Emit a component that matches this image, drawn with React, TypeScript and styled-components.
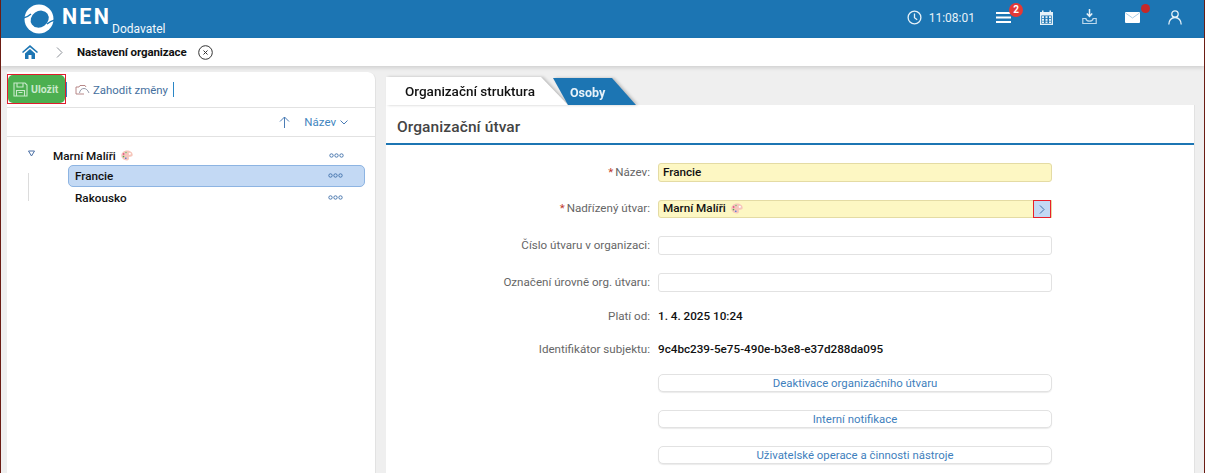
import React from "react";
import styled, { createGlobalStyle } from "styled-components";

const Global = createGlobalStyle`
  html, body { margin: 0; padding: 0; background: #efefef; }
  #root { width: 1205px; height: 473px; overflow: hidden; }
  * { box-sizing: border-box; }
`;

const Page = styled.div`
  width: 1205px; height: 473px; overflow: hidden; display: flex; flex-direction: column;
  background: #efefef; font-family: Roboto, "Liberation Sans", sans-serif; font-size: 12px;
  border-left: 1px solid #6b1d14; border-right: 1px solid #6b1d14;
`;
const Header = styled.header`
  height: 38px; flex: none; background: #1c75b3; color: #fff; display: flex; align-items: center;
  padding-left: 23px;
`;
const Brand = styled.div`display: flex; align-items: flex-start; height: 38px; padding-top: 4px;`;
const BrandName = styled.span`
  font-size: 21.5px; font-weight: 700; letter-spacing: 2.2px; line-height: 26px; margin-left: 8px;
`;
const BrandRole = styled.span`font-size: 12px; line-height: 14px; margin: 18px 0 0 1px; color: #f2f8fc;`;
const HeaderTools = styled.div`margin-left: auto; display: flex; align-items: center; height: 38px; padding-right: 21px;`;
const Clock = styled.div`display: flex; align-items: center; gap: 7px; font-size: 12px; font-weight: 400; color: #e6f1f8; margin-right: 20px; margin-bottom: 3px;`;
const ToolIcon = styled.span`
  position: relative; display: flex; width: 16px; height: 16px; margin-bottom: 4px; align-items: center; justify-content: center;
  & + & { margin-left: 27px; }
`;
const Badge = styled.span`
  position: absolute; top: -6px; right: -12px; width: 14px; height: 14px; border-radius: 50%;
  background: #e53935; color: #fff; font-size: 10px; font-weight: 700; line-height: 14px; text-align: center;
`;
const Dot = styled.span`
  position: absolute; top: -5px; right: -10px; width: 9px; height: 9px; border-radius: 50%; background: #c62828;
`;
const Crumbs = styled.nav`
  height: 28px; flex: none; background: #fff; display: flex; align-items: center; padding-left: 21px;
  box-shadow: 0 2px 4px rgba(0,0,0,.13); position: relative; z-index: 1;
`;
const CrumbArrow = styled.span`display: flex; margin-left: 18px; margin-right: 14px;`;
const CrumbText = styled.span`font-size: 11.5px; font-weight: 700; color: #111; letter-spacing: -.1px;`;
const CrumbClose = styled.span`display: flex; margin-left: 11px;`;
const Body = styled.div`flex: 1; display: flex; padding: 6px 9px 0 6px; min-height: 0; gap: 10px;`;
const Left = styled.aside`
  width: 369px; flex: none; background: #fff; border-radius: 0 8px 0 0; border-right: 1px solid #e2e2e2;
  display: flex; flex-direction: column;
`;
const Toolbar = styled.div`
  height: 36px; flex: none; display: flex; align-items: center; border-bottom: 1px solid #e2e2e2;
`;
const SaveButton = styled.button`
  width: 59px; height: 30px; margin-top: -1px; padding: 0; border: 1px solid #e01c2c; background: #fff; display: flex; outline: none;
`;
const SaveFace = styled.span`
  flex: 1; display: flex; align-items: center; gap: 3px; padding-left: 5px; background: #4caf50; border-radius: 5px;
  color: #c9e9cb; font: 700 10.5px Roboto, sans-serif;
`;
const Divider = styled.span`width: 1px; height: 15px; background: #2a86c6; flex: none;`;
const DiscardButton = styled.button`
  display: flex; align-items: center; gap: 3px; margin-left: 8px; margin-right: 5px; padding: 0; border: 0; background: none;
  font: 400 11.4px Roboto, sans-serif; color: #456f9e;
`;
const SortRow = styled.div`
  height: 29px; flex: none; display: flex; align-items: center; justify-content: flex-end; border-bottom: 1px solid #e2e2e2;
  padding-right: 27px; color: #3f86c0; font-size: 11.5px;
`;
const SortArrow = styled.span`display: flex; margin-right: 14px;`;
const SortCaret = styled.span`display: flex; margin-left: 4px;`;
const Tree = styled.div`padding: 9px 10px 0 0; display: flex; flex-direction: column;`;
const RootNode = styled.div`
  height: 19px; display: flex; align-items: center; padding-left: 21px; font-size: 11.7px; font-weight: 500; color: #111; position: relative;
`;
const Toggle = styled.span`display: flex; margin-top: -5px;`;
const NodeName = styled.span`margin-left: 18px; margin-right: 5px;`;
const Dots = styled.span`position: absolute; right: 21px; top: 50%; margin-top: -3px; display: flex;`;
const Branch = styled.div`position: relative; padding-left: 61px; &::before { content: ""; position: absolute; left: 21px; top: 8px; height: 28px; width: 1px; background: #dcdcdc; }`;
const ChildNode = styled.div<{ $active?: boolean }>`
  height: 22px; position: relative; display: flex; align-items: center; padding-left: 6px; font-size: 11.7px; font-weight: 500; color: #111;
  border-radius: 5px; border: 1px solid ${p => (p.$active ? "#8db4e2" : "transparent")}; background: ${p => (p.$active ? "#c3d9f4" : "transparent")};
`;
const Right = styled.main`flex: 1; display: flex; flex-direction: column; min-width: 0;`;
const Tabs = styled.div`height: 28px; flex: none; margin-top: 5px; display: flex; align-items: flex-end;`;
const TabShadow = styled.div`display: flex; flex: none; filter: drop-shadow(2px 0 1.5px rgba(0,0,0,.22));`;
const ActiveTab = styled.div`
  height: 28px; width: 182px; background: #fff; padding-left: 19px; line-height: 28px; font-size: 13.5px; font-weight: 500; color: #111;
  clip-path: polygon(0 0, 155px 0, 100% 100%, 0 100%);
`;
const Tab = styled.div`
  height: 27px; width: 83px; background: #1c75b3; color: #e8f2f9; font-size: 12.5px; font-weight: 700; line-height: 29px; padding-left: 17px;
  clip-path: polygon(0 0, 59px 0, 100% 100%, 15px 100%);
`;
const TabOverlap = styled(TabShadow)`margin-left: -15px;`;
const Panel = styled.section`flex: 1; background: #fff; display: flex; flex-direction: column; min-height: 0; border-right: 1px solid #e2e2e2;`;
const PanelTitle = styled.h2`
  margin: 0; height: 40px; flex: none; border-bottom: 2px solid #1c75b3; padding-left: 11px; line-height: 44px;
  font-size: 15.5px; font-weight: 500; color: #444; letter-spacing: .1px;
`;
const Form = styled.div`
  display: grid; grid-template-columns: 264px 394px; column-gap: 8px; align-items: start; padding-top: 18px;
`;
const Label = styled.label<{ $h: number }>`
  text-align: right; font-size: 11.6px; color: #666; height: ${p => p.$h}px; display: flex; align-items: center; justify-content: flex-end;
`;
const Star = styled.span`color: #c0392b; margin-right: 2px;`;
const Slot = styled.div<{ $h: number }>`height: ${p => p.$h}px; display: flex; align-items: flex-start;`;
const Field = styled.div<{ $required?: boolean }>`
  width: 100%; height: 19px; border-radius: 3px; display: flex; align-items: center; padding: 0 0 2px 4px; position: relative;
  font-size: 11.7px; font-weight: 500; color: #111;
  border: 1px solid ${p => (p.$required ? "#e4dba4" : "#e2e2e2")};
  background: ${p => (p.$required ? "#fdf7c3" : "#fff")};
`;
const PickerField = styled(Field)`height: 18px; border-radius: 3px 0 0 3px;`;
const FieldMark = styled.span`display: flex; margin-left: 5px;`;
const Picker = styled.span`
  position: absolute; right: 0; top: -1px; width: 18px; height: 18px; background: #c3d9f4; border: 1px solid #e8202a;
  display: flex; align-items: center; justify-content: center;
`;
const Value = styled.span`font-size: 11.7px; font-weight: 500; color: #111; line-height: 21px;`;
const ActionButton = styled.button`
  width: 100%; height: 18px; border: 1px solid #e2e2e2; border-radius: 5px; background: #fff; padding: 0;
  box-shadow: 0 1px 1px rgba(0,0,0,.08);
  font: 400 11.4px Roboto, sans-serif; color: #3f7fbd;
`;

const Logo = () => (
  <svg width="30" height="30" viewBox="0 0 30 30">
    <circle cx="15" cy="15" r="14.500" fill="#fff" />
    <ellipse cx="15.500" cy="15.500" rx="9.500" ry="8" fill="#1c75b3" transform="rotate(-35 15 15)" />
    <path d="M-1 14Q3 13.500 7 10M31 16Q27 16.500 23 20" fill="none" stroke="#1c75b3" strokeWidth="1.500" />
  </svg>
);
const Palette = () => (
  <svg width="12" height="11" viewBox="0 0 12 11">
    <path fill="#f6c6bb" d="M6 .5c3 0 5.700 1.800 5.700 4.300 0 1.700-1.500 2-2.700 1.900-1-.1-1.400.6-1.100 1.300.4 1-.2 2.400-2 2.400C3 10.400.3 8.500.3 5.500.3 2.700 3 .5 6 .5z" />
    <circle cx="2.600" cy="4" r=".9" fill="#e25b8a" /><circle cx="2.500" cy="6.600" r=".8" fill="#4caf50" />
    <circle cx="4.800" cy="8.300" r=".8" fill="#3f6fd8" /><circle cx="5" cy="2.500" r=".8" fill="#7ac27d" />
    <circle cx="8.800" cy="3.800" r="1.100" fill="#fff" />
  </svg>
);
const ThreeDots = () => (
  <Dots>
    <svg width="15" height="5" viewBox="0 0 15 5" fill="none" stroke="#3d6ea8" strokeWidth=".9">
      <circle cx="2.500" cy="2.500" r="1.700" /><circle cx="7.500" cy="2.500" r="1.700" /><circle cx="12.500" cy="2.500" r="1.700" />
    </svg>
  </Dots>
);

export default function App() {
  return (
    <Page>
      <Global />
      <Header>
        <Brand>
          <Logo />
          <BrandName>NEN</BrandName>
          <BrandRole>Dodavatel</BrandRole>
        </Brand>
        <HeaderTools>
          <Clock>
            <svg width="15" height="15" viewBox="0 0 15 15" fill="none" stroke="#e6f1f8" strokeWidth="1.300"><circle cx="7.500" cy="7.500" r="6.400" /><path d="M7.500 3.500v4.200l2.700 2" /></svg>
            11:08:01
          </Clock>
          <ToolIcon>
            <svg width="15" height="13" viewBox="0 0 15 13" stroke="#fff" strokeWidth="1.800"><path d="M0 2h15M0 6.500h15M0 11h15" /></svg>
            <Badge>2</Badge>
          </ToolIcon>
          <ToolIcon>
            <svg width="15" height="15" viewBox="0 0 15 15"><path fill="#e6f1f8" d="M1 2h2V.500h1.500V2h6V.500H12V2h2v13H1z" /><g fill="#1c75b3"><rect x="2.300" y="5.500" width="10.400" height="8.200" /></g><g fill="#e6f1f8"><rect x="3" y="6.200" width="2" height="2" /><rect x="6.500" y="6.200" width="2" height="2" /><rect x="10" y="6.200" width="2" height="2" /><rect x="3" y="9" width="2" height="1.800" /><rect x="6.500" y="9" width="2" height="1.800" /><rect x="10" y="9" width="2" height="1.800" /><rect x="3" y="11.500" width="2" height="1.600" /><rect x="6.500" y="11.500" width="2" height="1.600" /><rect x="10" y="11.500" width="2" height="1.600" /></g></svg>
          </ToolIcon>
          <ToolIcon>
            <svg width="15" height="16" viewBox="0 0 15 16" fill="none"><path d="M7.500 0v7M4.800 4.500l2.700 2.800 2.700-2.800" stroke="#e6f1f8" strokeWidth="1.500" /><path d="M.8 9.500v5h13.400v-5h-3c-.5 2-2 2.700-3.700 2.700S4.300 11.500 3.800 9.500z" stroke="#bcd8ec" strokeWidth="1.200" /></svg>
          </ToolIcon>
          <ToolIcon>
            <svg width="15" height="11" viewBox="0 0 15 11"><rect width="15" height="11" rx="1" fill="#fff" /><path d="M.5 1l7 5 7-5" fill="none" stroke="#a9cde6" strokeWidth="1" /></svg>
            <Dot />
          </ToolIcon>
          <ToolIcon>
            <svg width="14" height="15" viewBox="0 0 14 15" fill="none" stroke="#e6f1f8" strokeWidth="1.300"><circle cx="7" cy="4" r="3.200" /><path d="M.8 14.500c0-4 2.500-7 6.200-7s6.200 3 6.200 7" /></svg>
          </ToolIcon>
        </HeaderTools>
      </Header>
      <Crumbs>
        <svg width="16" height="14" viewBox="0 0 16 14"><path fill="#1c75b3" d="M8 0l8 7-1 1.100L8 2.200 1 8.100 0 7z" /><path fill="#1c75b3" d="M3 8.500L8 4l5 4.500V14H9.500v-4h-3v4H3z" /></svg>
        <CrumbArrow><svg width="7" height="11" viewBox="0 0 7 11" fill="none" stroke="#8a8f96"><path d="M1 .5l5 5-5 5" /></svg></CrumbArrow>
        <CrumbText>Nastavení organizace</CrumbText>
        <CrumbClose><svg width="15" height="15" viewBox="0 0 15 15" fill="none" stroke="#333"><circle cx="7.500" cy="7.500" r="6.800" /><path d="M5.500 5.500l4 4M9.500 5.500l-4 4" /></svg></CrumbClose>
      </Crumbs>
      <Body>
        <Left>
          <Toolbar>
            <SaveButton>
              <SaveFace>
                <svg width="15" height="15" viewBox="0 0 15 15" fill="none" stroke="#c9e9cb" strokeWidth="1.100"><path d="M1 1h11l2 2v11H1z" /><path d="M4 1v4h6V1M3.500 14V8.500h8V14M5.500 10.500h4" /></svg>
                Uložit
              </SaveFace>
            </SaveButton>
            <Divider />
            <DiscardButton>
              <svg width="15" height="11" viewBox="0 0 15 11" fill="none" stroke="#8a8fa0" strokeWidth=".9"><path d="M1 3v7h8M1 3h3l1-1.500h5l1 1.500" stroke="#b07a7a" /><path d="M4.500 9c.5-3 2-4.500 4.500-4.500 2 0 3.800 1.500 5 4.500" /></svg>
              Zahodit změny
            </DiscardButton>
            <Divider />
          </Toolbar>
          <SortRow>
            <SortArrow><svg width="11" height="12" viewBox="0 0 11 12" fill="none" stroke="#4a7cb5"><path d="M5.500 12V1M1 5.500L5.500 1 10 5.500" /></svg></SortArrow>
            Název
            <SortCaret><svg width="8" height="5" viewBox="0 0 8 5" fill="none" stroke="#4a7cb5"><path d="M.5.500L4 4 7.500.500" /></svg></SortCaret>
          </SortRow>
          <Tree>
            <RootNode>
              <Toggle><svg width="7" height="7" viewBox="0 0 7 7" fill="none" stroke="#4a6fa5"><path d="M.5 1h6L3.500 6z" /></svg></Toggle>
              <NodeName>Marní Malíři</NodeName>
              <Palette />
              <ThreeDots />
            </RootNode>
            <Branch>
              <ChildNode $active>Francie<ThreeDots /></ChildNode>
              <ChildNode>Rakousko<ThreeDots /></ChildNode>
            </Branch>
          </Tree>
        </Left>
        <Right>
          <Tabs>
            <TabShadow><ActiveTab>Organizační struktura</ActiveTab></TabShadow>
            <TabOverlap><Tab>Osoby</Tab></TabOverlap>
          </Tabs>
          <Panel>
            <PanelTitle>Organizační útvar</PanelTitle>
            <Form>
              <Label $h={17}><Star>*</Star>Název:</Label>
              <Slot $h={37}><Field $required>Francie</Field></Slot>
              <Label $h={15}><Star>*</Star>Nadřízený útvar:</Label>
              <Slot $h={36}>
                <PickerField $required>
                  Marní Malíři
                  <FieldMark><Palette /></FieldMark>
                  <Picker><svg width="6" height="9" viewBox="0 0 6 9" fill="none" stroke="#3d6ea8"><path d="M1 .5l4 4-4 4" /></svg></Picker>
                </PickerField>
              </Slot>
              <Label $h={17}>Číslo útvaru v organizaci:</Label>
              <Slot $h={37}><Field /></Slot>
              <Label $h={17}>Označení úrovně org. útvaru:</Label>
              <Slot $h={33}><Field /></Slot>
              <Label $h={20}>Platí od:</Label>
              <Slot $h={33}><Value>1. 4. 2025 10:24</Value></Slot>
              <Label $h={20}>Identifikátor subjektu:</Label>
              <Slot $h={35}><Value>9c4bc239-5e75-490e-b3e8-e37d288da095</Value></Slot>
              <span />
              <Slot $h={36}><ActionButton>Deaktivace organizačního útvaru</ActionButton></Slot>
              <span />
              <Slot $h={36}><ActionButton>Interní notifikace</ActionButton></Slot>
              <span />
              <Slot $h={27}><ActionButton>Uživatelské operace a činnosti nástroje</ActionButton></Slot>
            </Form>
          </Panel>
        </Right>
      </Body>
    </Page>
  );
}
